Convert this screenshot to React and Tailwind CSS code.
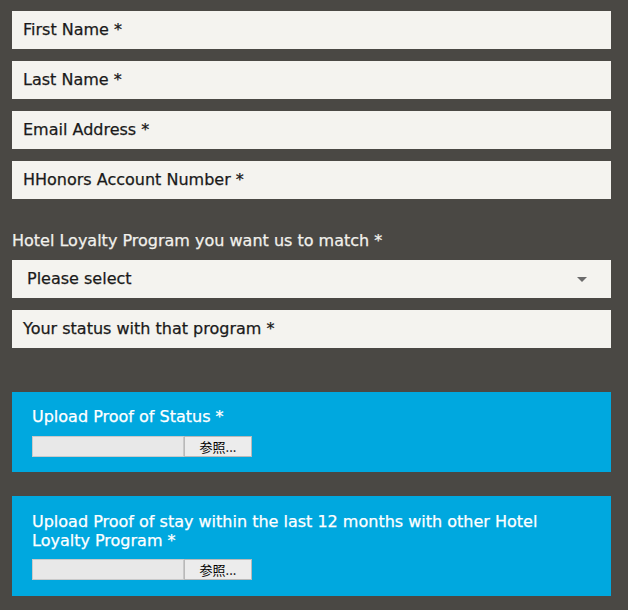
export default function App() {
  const font = { fontFamily: '"DejaVu Sans", "Noto Sans CJK JP", sans-serif' };
  const Field = ({ children }) => (
    <div className="h-[38px] bg-[#f4f3ef] flex items-center px-[11px] text-[16px] text-[#1a1a1a] [-webkit-text-stroke:0.25px]">{children}</div>
  );
  const FileInput = () => (
    <div className="flex h-[21px]">
      <div className="w-[152px] bg-[#e8e8e8] border border-[#c9c9c9]" />
      <div className="w-[68px] bg-[#ececec] border border-[#b9b9b9] flex items-center justify-center text-[13px] text-black" style={{ fontFamily: '"Noto Sans CJK JP", sans-serif' }}>参照...</div>
    </div>
  );
  return (
    <div className="w-[628px] h-[610px] bg-[#4a4844] pt-[11px] px-[12px] pr-[17px]" style={font}>
      <div className="flex flex-col gap-[12px]">
        <Field>First Name *</Field>
        <Field>Last Name *</Field>
        <Field>Email Address *</Field>
        <Field>HHonors Account Number *</Field>
      </div>
      <div className="mt-[32px] text-[16px] text-[#f2f1ec] leading-[20px] [-webkit-text-stroke:0.25px]">Hotel Loyalty Program you want us to match *</div>
      <div className="mt-[9px] h-[38px] bg-[#f4f3ef] flex items-center justify-between pl-[15px] pr-[24px] text-[16px] text-[#1a1a1a] [-webkit-text-stroke:0.25px]">
        <span>Please select</span>
        <span className="w-0 h-0 border-l-[5px] border-r-[5px] border-t-[5px] border-l-transparent border-r-transparent border-t-[#6b6b6b]" />
      </div>
      <div className="mt-[12px]">
        <Field>Your status with that program *</Field>
      </div>
      <div className="mt-[44px] h-[80px] bg-[#00a8df] px-[20px] pt-[15px]">
        <div className="text-[16px] text-white leading-[20px] [-webkit-text-stroke:0.25px]">Upload Proof of Status *</div>
        <div className="mt-[9px]"><FileInput /></div>
      </div>
      <div className="mt-[24px] h-[100px] bg-[#00a8df] px-[20px] pt-[16px]">
        <div className="text-[16px] text-white leading-[19px] [-webkit-text-stroke:0.25px]">Upload Proof of stay within the last 12 months with other Hotel<br />Loyalty Program *</div>
        <div className="mt-[9px]"><FileInput /></div>
      </div>
    </div>
  );
}
